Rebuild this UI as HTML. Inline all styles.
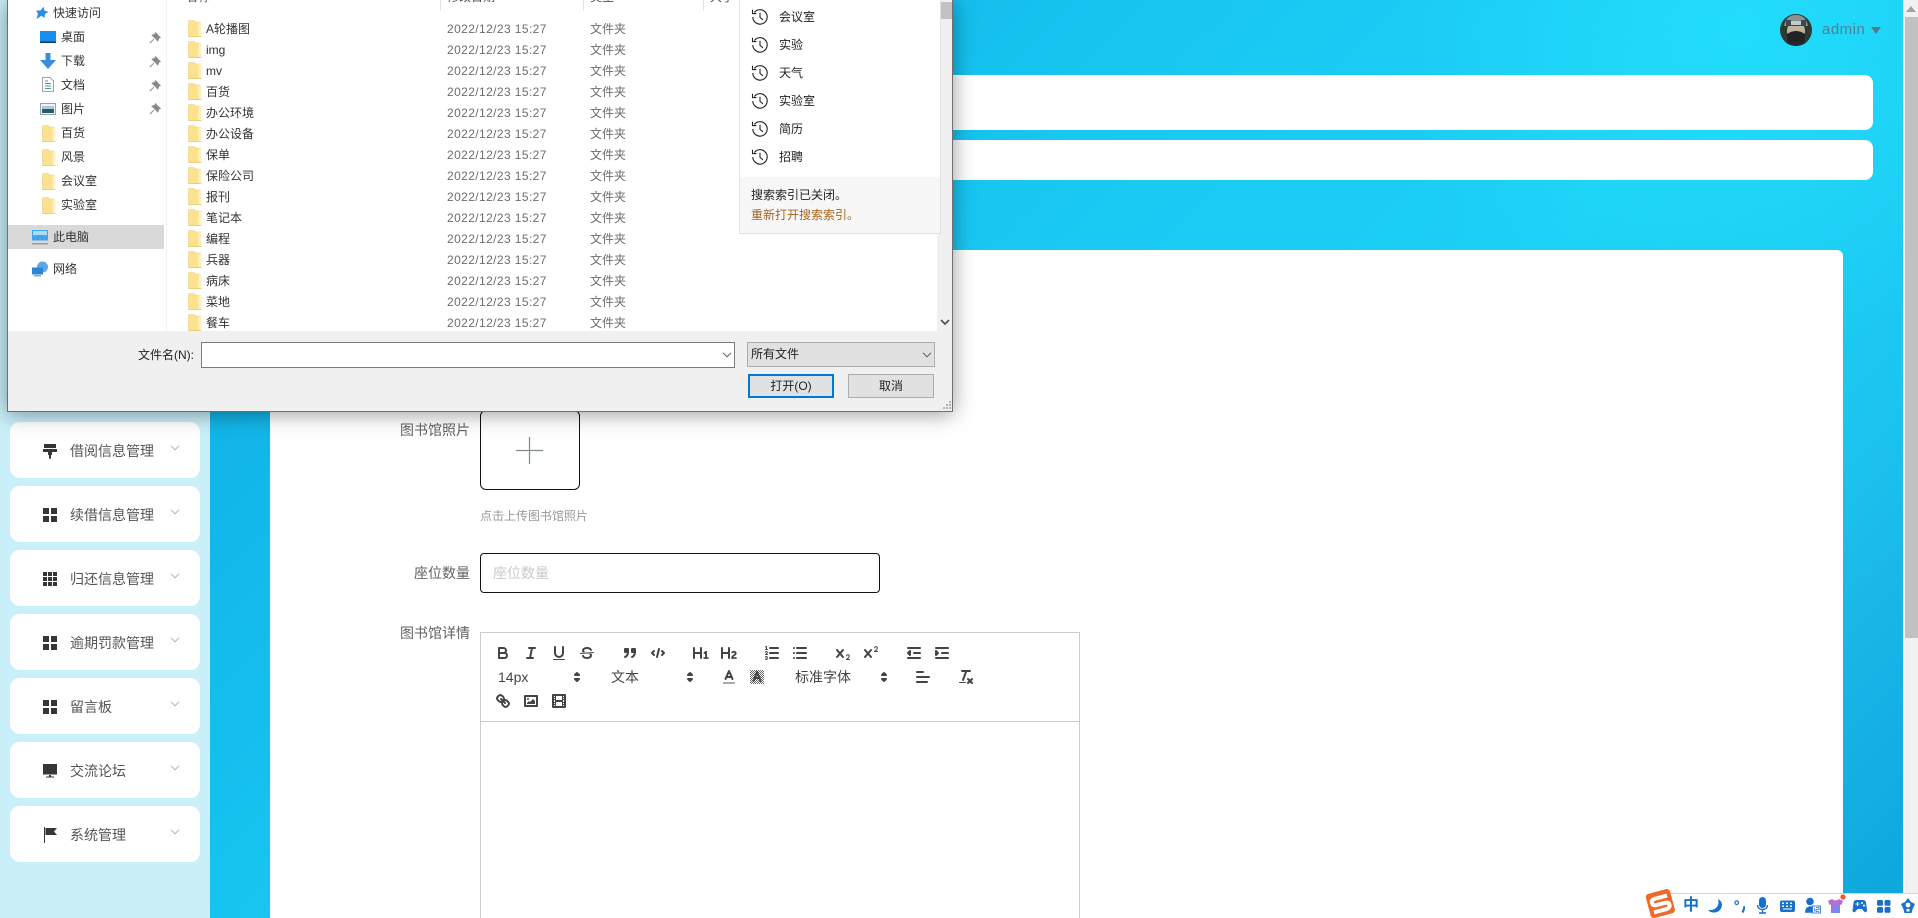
<!DOCTYPE html>
<html lang="zh-CN"><head><meta charset="utf-8"><title>图书馆</title>
<style>
*{box-sizing:border-box}
html,body{margin:0;padding:0;width:1918px;height:918px;overflow:hidden}
body{position:relative;font-family:"Liberation Sans","Noto Sans CJK SC",sans-serif;background:radial-gradient(circle 340px at 1740px 30px,#22dcfc 0%,rgba(34,220,252,0) 100%),linear-gradient(135deg,#0fa8e0 0%,#12b5e8 23.3%,#15c1ee 37%,#1ac9f3 45%,#1cd0f5 63.5%,#1cc6ef 80%,#1ab6e8 87.8%,#0fa8dd 97.7%,#0fa5dc 100%)}
.a{position:absolute}
.side{left:0;top:0;width:210px;height:918px;background:#c9eff9}
.card{position:absolute;left:10px;width:190px;height:56px;background:#fff;border-radius:10px}
.card span{position:absolute;left:60px;top:19px;font-size:14px;line-height:20px;color:#555;white-space:nowrap}
.card svg{position:absolute}
.chev{left:160px;top:23px;width:10px;height:6px}
.strip{left:210px;width:1663px;background:#fff;border-radius:8px}
.main{left:270px;top:250px;width:1573px;height:668px;background:#fff;border-radius:6px 6px 0 0}
.lb{position:absolute;font-size:14px;line-height:20px;color:#606266;text-align:right;right:1448px;white-space:nowrap}
.up{left:480px;top:410px;width:100px;height:80px;border:1px solid #111;border-radius:6px;background:#fff}
.hint{left:480px;top:507px;font-size:12px;line-height:18px;color:#999}
.inp{left:480px;top:553px;width:400px;height:40px;border:1px solid #111;border-radius:4px;background:#fff;padding-left:12px;font-size:14px;line-height:38px;color:#c8c9cc}
.ed{left:480px;top:632px;width:600px;height:320px;border:1px solid #ccc;background:#fff}
.tb{left:480px;top:721px;width:600px;height:1px;background:#ccc}
.q{position:absolute;width:18px;height:18px;overflow:visible}
.s{fill:none;stroke:#444;stroke-width:2;stroke-linecap:round;stroke-linejoin:round}
.t{fill:none;stroke:#444;stroke-width:1;stroke-linecap:round;stroke-linejoin:round}
.f{fill:#444}
.pk{position:absolute;font-size:14px;line-height:24px;color:#444;white-space:nowrap}
.sb{left:1903px;top:0;width:15px;height:918px;background:#f1f1f1;border-left:2px solid #fff}
.thumb{left:1905px;top:17px;width:13px;height:621px;background:#c1c1c1}
.dlg{left:7px;top:0;width:946px;height:412px;background:#fff;border:1px solid #6f6f6f;border-top:0;box-shadow:0 2px 20px rgba(0,0,0,.4);overflow:hidden;font-size:12px;color:#222}
.dlg>*{position:absolute}
.r{line-height:20px;height:20px;white-space:nowrap;font-size:12px}
.n{color:#333}
.d{color:#6d6d6d;letter-spacing:.4px}
.y{color:#6d6d6d}
.fold{width:14px;height:17px}
.foot{left:0;top:331px;width:946px;height:81px;background:#f0f0f0}
</style></head><body>
<svg width="0" height="0" style="position:absolute"><defs>
<symbol id="fd" viewBox="0 0 14 17"><path d="M.5 1.5Q.5.5 1.5.5H6L7.500 2H12.500V16.500H.5Z" fill="#fbe28f" stroke="#ecd078" stroke-width=".6"/><path d="M10.500 2.200H13.400V16.500H10.500Z" fill="#fff0bf"/><path d="M.5 16H13.500V16.700H.5Z" fill="#e8c465"/></symbol>
<symbol id="hs" viewBox="0 0 18 18"><path d="M3.300 4.500A7.200 7.200 0 1 1 1.800 9" fill="none" stroke="#222" stroke-width="1.100"/><path d="M1.500 1.800V5.600H5.400" fill="none" stroke="#222" stroke-width="1.100"/><path d="M9 4.800V9.400L12 11.800" fill="none" stroke="#222" stroke-width="1.100"/></symbol>
<symbol id="pn" viewBox="0 0 12 12"><path d="M6.500.8L11.200 5.500 9.800 6 8.800 8.800 3.200 3.200 6 2.200ZM4.800 7.200L1 11" fill="#8a8a8a" stroke="#8a8a8a"/></symbol>
<symbol id="cv" viewBox="0 0 10 6"><path d="M1 .8L5 4.800 9 .8" fill="none" stroke="#a9a9a9" stroke-width=".9"/></symbol>
<symbol id="cd" viewBox="0 0 10 6"><path d="M1 .8L5 4.800 9 .8" fill="none" stroke="#555" stroke-width="1"/></symbol>
<symbol id="g4" viewBox="0 0 14 14"><path fill="#363636" d="M0 0h6v6H0zM8 0h6v6H8zM0 8h6v6H0zM8 8h6v6H8z"/></symbol>
<symbol id="ar" viewBox="0 0 18 18"><polygon class="s f" points="7 11 9 13 11 11 7 11"/><polygon class="s f" points="7 7 9 5 11 7 7 7"/></symbol>
<pattern id="chk" width="2" height="2" patternUnits="userSpaceOnUse"><rect width="1" height="1" fill="#666"/><rect x="1" y="1" width="1" height="1" fill="#666"/></pattern>
</defs></svg>

<div class="a side"></div>
<div class="card" style="top:422px"><svg style="left:33px;top:22px" width="14" height="15" viewBox="0 0 14 15"><path fill="#363636" d="M1 0h12v4H1zM0 5h14v3H9v3H8v3.500L7 15 6 14.500V11H5V8H0z"/></svg><span>借阅信息管理</span><svg class="chev"><use href="#cv"/></svg></div>
<div class="card" style="top:486px"><svg style="left:33px;top:22px" width="14" height="14"><use href="#g4"/></svg><span>续借信息管理</span><svg class="chev"><use href="#cv"/></svg></div>
<div class="card" style="top:550px"><svg style="left:33px;top:22px" width="14" height="14" viewBox="0 0 14 14"><path fill="#363636" d="M0 0h4v4H0zM5 0h4v4H5zM10 0h4v4h-4zM0 5h4v4H0zM5 5h4v4H5zM10 5h4v4h-4zM0 10h4v4H0zM5 10h4v4H5zM10 10h4v4h-4z"/></svg><span>归还信息管理</span><svg class="chev"><use href="#cv"/></svg></div>
<div class="card" style="top:614px"><svg style="left:33px;top:22px" width="14" height="14"><use href="#g4"/></svg><span>逾期罚款管理</span><svg class="chev"><use href="#cv"/></svg></div>
<div class="card" style="top:678px"><svg style="left:33px;top:22px" width="14" height="14"><use href="#g4"/></svg><span>留言板</span><svg class="chev"><use href="#cv"/></svg></div>
<div class="card" style="top:742px"><svg style="left:33px;top:22px" width="14" height="14" viewBox="0 0 14 14"><path fill="#363636" d="M0 0h14v10.500H0zM6 11h2v1.500h3v1H3v-1h3z"/></svg><span>交流论坛</span><svg class="chev"><use href="#cv"/></svg></div>
<div class="card" style="top:806px"><svg style="left:33px;top:21px" width="14" height="16" viewBox="0 0 14 16"><path fill="#363636" d="M1 0h1v16H1zM2.500 1H14l-3 3.500L14 8H2.500z"/></svg><span>系统管理</span><svg class="chev"><use href="#cv"/></svg></div>

<div class="a strip" style="top:75px;height:55px"></div>
<div class="a strip" style="top:140px;height:40px"></div>

<svg class="a" style="left:1780px;top:14px" width="32" height="32" viewBox="0 0 32 32"><defs><clipPath id="av"><circle cx="16" cy="16" r="16"/></clipPath></defs><g clip-path="url(#av)"><rect width="32" height="32" fill="#2c3a33"/><path d="M4 12Q6 1 16 1T28 12Z" fill="#8f918b"/><ellipse cx="16" cy="17" rx="9" ry="10" fill="#bdb59c"/><path d="M6 6H26V12H6Z" fill="#3a4756"/><rect x="11" y="6.500" width="10" height="4.500" fill="#c4c9d0"/><path d="M7 20Q16 14 25 20V27Q16 33 7 27Z" fill="#222226"/><rect x="0" y="28" width="32" height="4" fill="#262a2a"/></g></svg>
<div class="a" style="left:1822px;top:20px;font-size:15px;line-height:20px;color:#4e8196;letter-spacing:.5px">admin</div>
<svg class="a" style="left:1871px;top:27px" width="10" height="7"><path d="M0 0h10L5 7z" fill="#56798a"/></svg>

<div class="a main"></div>
<div class="lb" style="top:420px">图书馆照片</div>
<div class="a up"></div>
<svg class="a" style="left:516px;top:437px" width="27" height="27"><path d="M13.500 0V27M0 13.500H27" stroke="#808a8f" stroke-width="1.200"/></svg>
<div class="a hint">点击上传图书馆照片</div>
<div class="lb" style="top:563px">座位数量</div>
<div class="a inp">座位数量</div>
<div class="lb" style="top:623px">图书馆详情</div>
<div class="a ed"></div>
<div class="a tb"></div>

<!-- quill toolbar -->
<svg class="q" style="left:494px;top:644px" viewBox="0 0 18 18"><path class="s" d="M5,4H9.500A2.500,2.500,0,0,1,12,6.500v0A2.500,2.500,0,0,1,9.500,9H5A0,0,0,0,1,5,9V4A0,0,0,0,1,5,4Z"/><path class="s" d="M5,9h5.500A2.500,2.500,0,0,1,13,11.500v0A2.500,2.500,0,0,1,10.500,14H5a0,0,0,0,1,0,0V9A0,0,0,0,1,5,9Z"/></svg>
<svg class="q" style="left:522px;top:644px" viewBox="0 0 18 18"><line class="s" x1="7" x2="13" y1="4" y2="4"/><line class="s" x1="5" x2="11" y1="14" y2="14"/><line class="s" x1="8" x2="10" y1="14" y2="4"/></svg>
<svg class="q" style="left:550px;top:644px" viewBox="0 0 18 18"><path class="s" d="M5,3V9a4.012,4.012,0,0,0,4,4H9a4.012,4.012,0,0,0,4-4V3"/><rect class="f" height="1" rx=".5" ry=".5" width="12" x="3" y="15"/></svg>
<svg class="q" style="left:578px;top:644px" viewBox="0 0 18 18"><line class="t" x1="15.500" x2="2.500" y1="8.500" y2="9.500"/><path class="f" d="M9.007,8C6.542,7.791,6,7.519,6,6.500,6,5.792,7.283,5,9,5c1.571,0,2.765.679,2.969,1.309a1,1,0,0,0,1.900-.617C13.356,4.106,11.354,3,9,3,6.200,3,4,4.538,4,6.500a3.200,3.200,0,0,0,.5,1.843Z"/><path class="f" d="M8.984,10C11.457,10.208,12,10.479,12,11.500c0,.708-1.283,1.500-3,1.500-1.571,0-2.765-.679-2.969-1.309a1,1,0,1,0-1.900.617C4.644,13.894,6.646,15,9,15c2.800,0,5-1.538,5-3.500a3.200,3.200,0,0,0-.5-1.843Z"/></svg>
<svg class="q" style="left:621px;top:644px" viewBox="0 0 18 18"><rect class="s f" height="3" width="3" x="4" y="5"/><rect class="s f" height="3" width="3" x="11" y="5"/><path class="s f" d="M7,8c0,4.031-3,5-3,5"/><path class="s f" d="M14,8c0,4.031-3,5-3,5"/></svg>
<svg class="q" style="left:649px;top:644px" viewBox="0 0 18 18"><polyline class="s" points="5 7 3 9 5 11"/><polyline class="s" points="13 7 15 9 13 11"/><line class="s" x1="10" x2="8" y1="5" y2="13"/></svg>
<svg class="q" style="left:692px;top:644px" viewBox="0 0 18 18"><path class="f" d="M10,4V14a1,1,0,0,1-2,0V10H3v4a1,1,0,0,1-2,0V4A1,1,0,0,1,3,4V8H8V4a1,1,0,0,1,2,0Zm6.068,9.209H14.990V7.599a.541.541,0,0,0-.605-.605h-.627a1.011,1.011,0,0,0-.748.297L11.645,8.566a.544.544,0,0,0-.022.858l.286.308a.539.539,0,0,0,.847.033l.099-.088a1.214,1.214,0,0,0,.242-.353h.022s-.011.309-.011.605V13.209H12.041a.541.541,0,0,0-.605.605v.439a.541.541,0,0,0,.605.605h4.027a.541.541,0,0,0,.605-.605v-.439A.541.541,0,0,0,16.068,13.209Z"/></svg>
<svg class="q" style="left:720px;top:644px" viewBox="0 0 18 18"><path class="f" d="M16.740,13.814v.439a.541.541,0,0,1-.605.605H11.855a.584.584,0,0,1-.649-.605V14.013c0-2.905,3.399-3.422,3.399-4.555a.777.777,0,0,0-.847-.781,1.177,1.177,0,0,0-.836.385c-.275.264-.561.374-.858.132l-.429-.341c-.308-.242-.385-.518-.154-.814a2.972,2.972,0,0,1,2.454-1.177,2.454,2.454,0,0,1,2.684,2.409c0,2.453-3.179,2.927-3.278,3.938h2.794A.541.541,0,0,1,16.740,13.814ZM9,3A1,1,0,0,0,8,4V8H3V4A1,1,0,0,0,1,4V14a1,1,0,0,0,2,0V10H8v4a1,1,0,0,0,2,0V4A1,1,0,0,0,9,3Z"/></svg>
<svg class="q" style="left:763px;top:644px" viewBox="0 0 18 18"><line class="s" x1="7" x2="15" y1="4" y2="4"/><line class="s" x1="7" x2="15" y1="9" y2="9"/><line class="s" x1="7" x2="15" y1="14" y2="14"/><line class="t" x1="2.500" x2="4.500" y1="5.500" y2="5.500"/><path class="f" d="M3.500,6A0.500,0.500,0,0,1,3,5.500V3.085l-0.276.138A0.500,0.500,0,0,1,2.053,3c-0.124-.247-0.023-0.324.224-0.447l1-.5A0.500,0.500,0,0,1,4,2.500v3A0.500,0.500,0,0,1,3.500,6Z"/><path class="t" d="M4.500,10.500h-2c0-.234,1.850-1.076,1.850-2.234A0.959,0.959,0,0,0,2.500,8.156"/><path class="t" d="M2.500,14.846a0.959,0.959,0,0,0,1.850-.109A0.700,0.700,0,0,0,3.750,14a0.688,0.688,0,0,0,.6-0.736,0.959,0.959,0,0,0-1.850-.109"/></svg>
<svg class="q" style="left:791px;top:644px" viewBox="0 0 18 18"><line class="s" x1="6" x2="15" y1="4" y2="4"/><line class="s" x1="6" x2="15" y1="9" y2="9"/><line class="s" x1="6" x2="15" y1="14" y2="14"/><line class="s" x1="3" x2="3" y1="4" y2="4"/><line class="s" x1="3" x2="3" y1="9" y2="9"/><line class="s" x1="3" x2="3" y1="14" y2="14"/></svg>
<svg class="q" style="left:834px;top:644px" viewBox="0 0 18 18"><path class="f" d="M15.500,15H13.861a3.858,3.858,0,0,0,1.914-2.975,1.800,1.800,0,0,0-1.600-1.751A1.921,1.921,0,0,0,12.021,11.700a0.500,0.500,0,1,0,.957.291h0a0.914,0.914,0,0,1,1.053-.725,0.810,0.810,0,0,1,.744.762c0,1.076-1.170,1.870-1.940,2.431A1.456,1.456,0,0,0,12,15.500a0.500,0.500,0,0,0,.5.5h3A0.500,0.500,0,0,0,15.500,15Z"/><path class="f" d="M9.650,5.241a1,1,0,0,0-1.409.108L6,7.964,3.759,5.349A1,1,0,0,0,2.241,6.649L4.684,9.500,2.241,12.350A1,1,0,0,0,3.759,13.650L6,11.036,8.241,13.650a1,1,0,1,0,1.518-1.300L7.316,9.500,9.759,6.651A1,1,0,0,0,9.650,5.241Z"/></svg>
<svg class="q" style="left:862px;top:644px" viewBox="0 0 18 18"><path class="f" d="M15.500,7H13.861a4.015,4.015,0,0,0,1.914-2.975,1.800,1.800,0,0,0-1.600-1.751A1.922,1.922,0,0,0,12.021,3.700a0.500,0.500,0,1,0,.957.291,0.917,0.917,0,0,1,1.053-.725,0.810,0.810,0,0,1,.744.762c0,1.077-1.164,1.925-1.934,2.486A1.423,1.423,0,0,0,12,7.500a0.500,0.500,0,0,0,.5.5h3A0.500,0.500,0,0,0,15.500,7Z"/><path class="f" d="M9.651,5.241a1,1,0,0,0-1.410.108L6,7.964,3.759,5.349a1,1,0,1,0-1.519,1.300L4.683,9.500,2.241,12.350a1,1,0,1,0,1.519,1.300L6,11.036,8.241,13.650a1,1,0,0,0,1.519-1.300L7.317,9.500,9.759,6.651A1,1,0,0,0,9.651,5.241Z"/></svg>
<svg class="q" style="left:905px;top:644px" viewBox="0 0 18 18"><line class="s" x1="3" x2="15" y1="14" y2="14"/><line class="s" x1="3" x2="15" y1="4" y2="4"/><line class="s" x1="9" x2="15" y1="9" y2="9"/><polyline class="s f" points="5 7 5 11 3 9 5 7"/></svg>
<svg class="q" style="left:933px;top:644px" viewBox="0 0 18 18"><line class="s" x1="3" x2="15" y1="14" y2="14"/><line class="s" x1="3" x2="15" y1="4" y2="4"/><line class="s" x1="9" x2="15" y1="9" y2="9"/><polyline class="s f" points="3 7 3 11 5 9 3 7"/></svg>

<div class="pk" style="left:498px;top:665px">14px</div><svg class="q" style="left:568px;top:668px"><use href="#ar"/></svg>
<div class="pk" style="left:611px;top:665px">文本</div><svg class="q" style="left:681px;top:668px"><use href="#ar"/></svg>
<svg class="q" style="left:720px;top:668px" viewBox="0 0 18 18"><line x1="3" x2="15" y1="15" y2="15" stroke="#aaa" stroke-width="2"/><polyline class="s" points="5.500 11 9 3 12.500 11"/><line class="s" x1="11.630" x2="6.380" y1="9" y2="9"/></svg>
<svg class="q" style="left:748px;top:668px" viewBox="0 0 18 18"><rect x="2" y="2" width="14" height="14" fill="url(#chk)"/><polyline class="s" points="5.500 13 9 4 12.500 13"/><line class="s" x1="11.630" x2="6.380" y1="10" y2="10"/></svg>
<div class="pk" style="left:795px;top:665px">标准字体</div><svg class="q" style="left:875px;top:668px"><use href="#ar"/></svg>
<svg class="q" style="left:914px;top:668px" viewBox="0 0 18 18"><line class="s" x1="3" x2="15" y1="9" y2="9"/><line class="s" x1="3" x2="13" y1="14" y2="14"/><line class="s" x1="3" x2="9" y1="4" y2="4"/></svg>
<svg class="q" style="left:957px;top:668px" viewBox="0 0 18 18"><line class="s" x1="5" x2="13" y1="3" y2="3"/><line class="s" x1="6" x2="9.350" y1="12" y2="3"/><line class="s" x1="11" x2="15" y1="11" y2="15"/><line class="s" x1="15" x2="11" y1="11" y2="15"/><rect class="f" height="1" rx=".5" ry=".5" width="7" x="2" y="14"/></svg>
<svg class="q" style="left:494px;top:692px" viewBox="0 0 18 18"><line class="s" x1="7" x2="11" y1="7" y2="11"/><path class="s" d="M8.900,4.577a3.476,3.476,0,0,1,.36,4.679A3.476,3.476,0,0,1,4.577,8.900C3.185,7.500,2.035,6.400,4.217,4.217S7.500,3.185,8.900,4.577Z"/><path class="s" d="M13.423,9.100a3.476,3.476,0,0,0-4.679-.36,3.476,3.476,0,0,0,.36,4.679c1.392,1.392,2.500,2.542,4.679.36S14.815,10.500,13.423,9.100Z"/></svg>
<svg class="q" style="left:522px;top:692px" viewBox="0 0 18 18"><rect class="s" height="10" width="12" x="3" y="4"/><circle class="f" cx="6" cy="7" r="1"/><polyline class="f" points="5 12 5 11 7 9 8 10 11 7 13 9 13 12 5 12"/></svg>
<svg class="q" style="left:550px;top:692px" viewBox="0 0 18 18"><rect class="s" height="12" width="12" x="3" y="3"/><rect class="f" height="12" width="1" x="5" y="3"/><rect class="f" height="12" width="1" x="12" y="3"/><rect class="f" height="2" width="8" x="5" y="8"/><rect class="f" height="1" width="3" x="3" y="5"/><rect class="f" height="1" width="3" x="3" y="7"/><rect class="f" height="1" width="3" x="3" y="10"/><rect class="f" height="1" width="3" x="3" y="12"/><rect class="f" height="1" width="3" x="12" y="5"/><rect class="f" height="1" width="3" x="12" y="7"/><rect class="f" height="1" width="3" x="12" y="10"/><rect class="f" height="1" width="3" x="12" y="12"/></svg>

<!-- page scrollbar -->
<div class="a sb"></div>
<div class="a thumb"></div>
<svg class="a" style="left:1906px;top:6px" width="10" height="6"><path d="M0 6L5 0l5 6z" fill="#a3a3a3"/></svg>

<!-- taskbar ime -->
<div class="a" style="left:1650px;top:893px;width:268px;height:25px;background:#fff;border-top:1px solid #d5d5e2"></div>
<svg class="a" style="left:1640px;top:885px" width="278" height="33" viewBox="0 0 278 33">
<g transform="rotate(-15 20.500 19)"><rect x="8" y="6" width="25" height="25" rx="3.500" fill="#ee6a28"/><path d="M29 12.500H17Q12.500 12.500 12.500 15.800T17 19H24.500Q29 19 29 22T24.500 25.500H12" fill="none" stroke="#fff" stroke-width="4"/></g>
<path d="M78 14C80 20 76 26 68 25 71 29 81 29 82 20 82 17 80 15 78 14Z" fill="#1a6fc9"/>
<circle cx="96.700" cy="17.700" r="1.800" fill="none" stroke="#1a6fc9" stroke-width="1.200"/><path d="M103.500 21.500Q105 22.500 102.500 27.500" fill="none" stroke="#1a6fc9" stroke-width="2.200"/>
<rect x="119" y="12" width="7" height="11" rx="3.500" fill="#1a6fc9"/><path d="M117.500 20C117.500 26 127.500 26 127.500 20M122.500 25V28M119 28H126" fill="none" stroke="#1a6fc9" stroke-width="1.400"/>
<rect x="140" y="15.500" width="15" height="11.500" rx="2" fill="#1a6fc9"/>
<path d="M142 17.500h2v1.500h-2zM146 17.500h2v1.500h-2zM150 17.500h2v1.500h-2zM142 20.500h2v1.500h-2zM146 20.500h2v1.500h-2zM150 20.500h2v1.500h-2zM143 23.500h9v1h-9z" fill="#fff"/>
<circle cx="170" cy="16.500" r="3.800" fill="#1a6fc9"/><path d="M165 27.700C165 22 169 20.500 172.500 21.500V27.700Z" fill="#1a6fc9"/><rect x="172.500" y="21" width="8" height="7" fill="#fff" stroke="#1a6fc9" stroke-width=".8"/><path d="M174.500 22.500V26.500M176 22.500h3v2h-3v2h3" stroke="#1a6fc9" fill="none" stroke-width=".7"/>
<path d="M188 16L192 14Q195.500 17 199 14L203 16 201.500 20 200 19.500V28H191V19.500L189.500 20Z" fill="#b370cf"/><path d="M195 20L200 19.500V28H191Z" fill="#7d88ee"/><circle cx="203" cy="12" r="2.600" fill="#f1552d"/>
<path d="M213.500 18Q213.500 15 216.500 15H223Q226 15 226 18L227 25.500Q226.500 28.500 224 26.500L222 24H217.500L215.500 26.500Q213 28.500 212.500 25.500Z" fill="#1a6fc9"/><path d="M215.500 19h4M217.500 17v4" stroke="#fff" stroke-width="1.100"/><circle cx="222" cy="18" r="1" fill="#fff"/><circle cx="224" cy="20.500" r="1" fill="#fff"/>
<rect x="237" y="15" width="6" height="5.800" rx="1.600" fill="#1a6fc9"/><rect x="244.500" y="15" width="6" height="5.800" rx="1.600" fill="#1a6fc9"/><rect x="237" y="22" width="6" height="5.800" rx="1.600" fill="#1a6fc9"/><rect x="244.500" y="22" width="6" height="5.800" rx="1.600" fill="#1a6fc9"/>
<path d="M268 13L271 17 275 19 273 23 271.500 28H264.500L263 23 261 19 265 17Z" fill="#1a6fc9"/><circle cx="268" cy="20" r="2.400" fill="#fff"/><path d="M266.500 24h3v2.500h-3z" fill="#fff"/>
</svg>
<div class="a" style="left:1683px;top:895px;font-size:16px;font-weight:bold;line-height:22px;color:#1a6fc9">中</div>

<!-- file dialog -->
<div class="a dlg">
<div style="left:158px;top:0;width:1px;height:331px;background:#f3f3f3"></div>
<div class="r" style="left:178px;top:-13px;color:#555">名称</div>
<div class="r" style="left:439px;top:-13px;color:#555">修改日期</div>
<div class="r" style="left:582px;top:-13px;color:#555">类型</div>
<div class="r" style="left:702px;top:-13px;color:#555">大小</div>
<div style="left:432px;top:0;width:1px;height:11px;background:#e5e5e5"></div>
<div style="left:575px;top:0;width:1px;height:11px;background:#e5e5e5"></div>
<div style="left:695px;top:0;width:1px;height:11px;background:#e5e5e5"></div>

<!-- nav -->
<svg style="left:27px;top:6px" width="14" height="14" viewBox="0 0 14 14"><path d="M8.500.8L9.500 4.500 13.500 6 10 8 9.500 12 6.500 9.800 1.500 13 3 7.500 1 4.500 5.500 4.500Z" fill="#2e8ede"/></svg>
<div class="r n" style="left:45px;top:3px">快速访问</div>
<svg style="left:32px;top:31px" width="16" height="12" viewBox="0 0 16 12"><rect width="16" height="12" fill="#1a8fee"/><rect y="10.500" width="16" height="1.500" fill="#0c3c66"/></svg>
<div class="r n" style="left:53px;top:27px">桌面</div>
<svg style="left:32px;top:53px" width="16" height="16" viewBox="0 0 16 16"><path d="M5.500 0H10.500V7H16L8 16 0 7H5.500Z" fill="#3a8fdc"/></svg>
<div class="r n" style="left:53px;top:51px">下载</div>
<svg style="left:34px;top:77px" width="12" height="15" viewBox="0 0 12 15"><path d="M.5.5H8L11.500 4V14.500H.5Z" fill="#fff" stroke="#9aa7b3"/><path d="M3 4H6M3 6.500H9M3 9H9M3 11.500H9" stroke="#4a9a9a" stroke-width=".9"/></svg>
<div class="r n" style="left:53px;top:75px">文档</div>
<svg style="left:32px;top:103px" width="16" height="12" viewBox="0 0 16 12"><rect x=".5" y=".5" width="15" height="11" fill="#eef3f7" stroke="#8ea4b6"/><rect x="2" y="3" width="12" height="3" fill="#a8cbe2"/><rect x="2" y="6" width="12" height="4" fill="#2f5a60"/></svg>
<div class="r n" style="left:53px;top:99px">图片</div>
<svg class="fold" style="left:34px;top:125px"><use href="#fd"/></svg><div class="r n" style="left:53px;top:123px">百货</div>
<svg class="fold" style="left:34px;top:149px"><use href="#fd"/></svg><div class="r n" style="left:53px;top:147px">风景</div>
<svg class="fold" style="left:34px;top:173px"><use href="#fd"/></svg><div class="r n" style="left:53px;top:171px">会议室</div>
<svg class="fold" style="left:34px;top:197px"><use href="#fd"/></svg><div class="r n" style="left:53px;top:195px">实验室</div>
<svg style="left:141px;top:32px" width="12" height="12"><use href="#pn"/></svg>
<svg style="left:141px;top:56px" width="12" height="12"><use href="#pn"/></svg>
<svg style="left:141px;top:80px" width="12" height="12"><use href="#pn"/></svg>
<svg style="left:141px;top:103px" width="12" height="12"><use href="#pn"/></svg>
<div style="left:0;top:225px;width:156px;height:24px;background:#d9d9d9"></div>
<svg style="left:24px;top:230px" width="16" height="15" viewBox="0 0 16 15"><rect width="16" height="10.500" fill="#3fa4e8"/><rect x="1" y="1" width="14" height="4" fill="#a8dcf5"/><rect y="13" width="16" height="1.500" fill="#9a9a9a"/></svg>
<div class="r n" style="left:45px;top:227px">此电脑</div>
<svg style="left:24px;top:261px" width="16" height="16" viewBox="0 0 16 16"><circle cx="10.500" cy="6" r="5.500" fill="#5aa8e6"/><rect y="6.500" width="11" height="7" fill="#2d86d0"/><rect x="2" y="14" width="7" height="1.500" fill="#8ca9c0"/></svg>
<div class="r n" style="left:45px;top:259px">网络</div>

<!-- files -->
<svg class="fold" style="left:180px;top:20px"><use href="#fd"/></svg><div class="r n" style="left:198px;top:19px">A轮播图</div><div class="r d" style="left:439px;top:19px">2022/12/23 15:27</div><div class="r y" style="left:582px;top:19px">文件夹</div>
<svg class="fold" style="left:180px;top:41px"><use href="#fd"/></svg><div class="r n" style="left:198px;top:40px">img</div><div class="r d" style="left:439px;top:40px">2022/12/23 15:27</div><div class="r y" style="left:582px;top:40px">文件夹</div>
<svg class="fold" style="left:180px;top:62px"><use href="#fd"/></svg><div class="r n" style="left:198px;top:61px">mv</div><div class="r d" style="left:439px;top:61px">2022/12/23 15:27</div><div class="r y" style="left:582px;top:61px">文件夹</div>
<svg class="fold" style="left:180px;top:83px"><use href="#fd"/></svg><div class="r n" style="left:198px;top:82px">百货</div><div class="r d" style="left:439px;top:82px">2022/12/23 15:27</div><div class="r y" style="left:582px;top:82px">文件夹</div>
<svg class="fold" style="left:180px;top:104px"><use href="#fd"/></svg><div class="r n" style="left:198px;top:103px">办公环境</div><div class="r d" style="left:439px;top:103px">2022/12/23 15:27</div><div class="r y" style="left:582px;top:103px">文件夹</div>
<svg class="fold" style="left:180px;top:125px"><use href="#fd"/></svg><div class="r n" style="left:198px;top:124px">办公设备</div><div class="r d" style="left:439px;top:124px">2022/12/23 15:27</div><div class="r y" style="left:582px;top:124px">文件夹</div>
<svg class="fold" style="left:180px;top:146px"><use href="#fd"/></svg><div class="r n" style="left:198px;top:145px">保单</div><div class="r d" style="left:439px;top:145px">2022/12/23 15:27</div><div class="r y" style="left:582px;top:145px">文件夹</div>
<svg class="fold" style="left:180px;top:167px"><use href="#fd"/></svg><div class="r n" style="left:198px;top:166px">保险公司</div><div class="r d" style="left:439px;top:166px">2022/12/23 15:27</div><div class="r y" style="left:582px;top:166px">文件夹</div>
<svg class="fold" style="left:180px;top:188px"><use href="#fd"/></svg><div class="r n" style="left:198px;top:187px">报刊</div><div class="r d" style="left:439px;top:187px">2022/12/23 15:27</div><div class="r y" style="left:582px;top:187px">文件夹</div>
<svg class="fold" style="left:180px;top:209px"><use href="#fd"/></svg><div class="r n" style="left:198px;top:208px">笔记本</div><div class="r d" style="left:439px;top:208px">2022/12/23 15:27</div><div class="r y" style="left:582px;top:208px">文件夹</div>
<svg class="fold" style="left:180px;top:230px"><use href="#fd"/></svg><div class="r n" style="left:198px;top:229px">编程</div><div class="r d" style="left:439px;top:229px">2022/12/23 15:27</div><div class="r y" style="left:582px;top:229px">文件夹</div>
<svg class="fold" style="left:180px;top:251px"><use href="#fd"/></svg><div class="r n" style="left:198px;top:250px">兵器</div><div class="r d" style="left:439px;top:250px">2022/12/23 15:27</div><div class="r y" style="left:582px;top:250px">文件夹</div>
<svg class="fold" style="left:180px;top:272px"><use href="#fd"/></svg><div class="r n" style="left:198px;top:271px">病床</div><div class="r d" style="left:439px;top:271px">2022/12/23 15:27</div><div class="r y" style="left:582px;top:271px">文件夹</div>
<svg class="fold" style="left:180px;top:293px"><use href="#fd"/></svg><div class="r n" style="left:198px;top:292px">菜地</div><div class="r d" style="left:439px;top:292px">2022/12/23 15:27</div><div class="r y" style="left:582px;top:292px">文件夹</div>
<svg class="fold" style="left:180px;top:314px"><use href="#fd"/></svg><div class="r n" style="left:198px;top:313px">餐车</div><div class="r d" style="left:439px;top:313px">2022/12/23 15:27</div><div class="r y" style="left:582px;top:313px">文件夹</div>

<!-- list scrollbar -->
<div style="left:929px;top:0;width:16px;height:331px;background:#f0f0f0"></div>
<div style="left:933px;top:2px;width:11px;height:17px;background:#c2c2c2"></div>
<svg style="left:932px;top:319px" width="10" height="7"><path d="M1 1L5 5 9 1" fill="none" stroke="#555" stroke-width="1.800"/></svg>

<!-- history popup -->
<div style="left:731px;top:0;width:202px;height:234px;background:#fff;border:1px solid #e2e2e2;border-top:0"></div>
<svg style="left:743px;top:8px" width="18" height="18"><use href="#hs"/></svg><div class="r n" style="left:771px;top:7px;color:#222">会议室</div>
<svg style="left:743px;top:36px" width="18" height="18"><use href="#hs"/></svg><div class="r n" style="left:771px;top:35px;color:#222">实验</div>
<svg style="left:743px;top:64px" width="18" height="18"><use href="#hs"/></svg><div class="r n" style="left:771px;top:63px;color:#222">天气</div>
<svg style="left:743px;top:92px" width="18" height="18"><use href="#hs"/></svg><div class="r n" style="left:771px;top:91px;color:#222">实验室</div>
<svg style="left:743px;top:120px" width="18" height="18"><use href="#hs"/></svg><div class="r n" style="left:771px;top:119px;color:#222">简历</div>
<svg style="left:743px;top:148px" width="18" height="18"><use href="#hs"/></svg><div class="r n" style="left:771px;top:147px;color:#222">招聘</div>
<div style="left:732px;top:177px;width:200px;height:56px;background:#f7f7f7"></div>
<div class="r" style="left:743px;top:185px;color:#222">搜索索引已关闭。</div>
<div class="r" style="left:743px;top:205px;color:#a4661c">重新打开搜索索引。</div>

<!-- footer -->
<div class="foot"></div>
<div class="r" style="left:130px;top:345px;color:#222">文件名(N):</div>
<div style="left:193px;top:342px;width:534px;height:26px;background:#fff;border:1px solid #7a7a7a"></div>
<svg style="left:714px;top:352px" width="10" height="6"><use href="#cd"/></svg>
<div style="left:739px;top:342px;width:188px;height:25px;background:#e1e1e1;border:1px solid #adadad"></div>
<div class="r" style="left:743px;top:344px;color:#222">所有文件</div>
<svg style="left:914px;top:352px" width="10" height="6"><use href="#cd"/></svg>
<div style="left:740px;top:374px;width:86px;height:24px;background:#e1e1e1;border:2px solid #0078d7;text-align:center;line-height:20px;font-size:12px;color:#222">打开(O)</div>
<div style="left:840px;top:374px;width:86px;height:24px;background:#e1e1e1;border:1px solid #adadad;text-align:center;line-height:22px;font-size:12px;color:#222">取消</div>
<svg style="left:934px;top:400px" width="10" height="10"><path fill="#b5b5b5" d="M7 1h2v2H7zM4 4h2v2H4zM7 4h2v2H7zM1 7h2v2H1zM4 7h2v2H4zM7 7h2v2H7z"/></svg>
</div>
</body></html>
